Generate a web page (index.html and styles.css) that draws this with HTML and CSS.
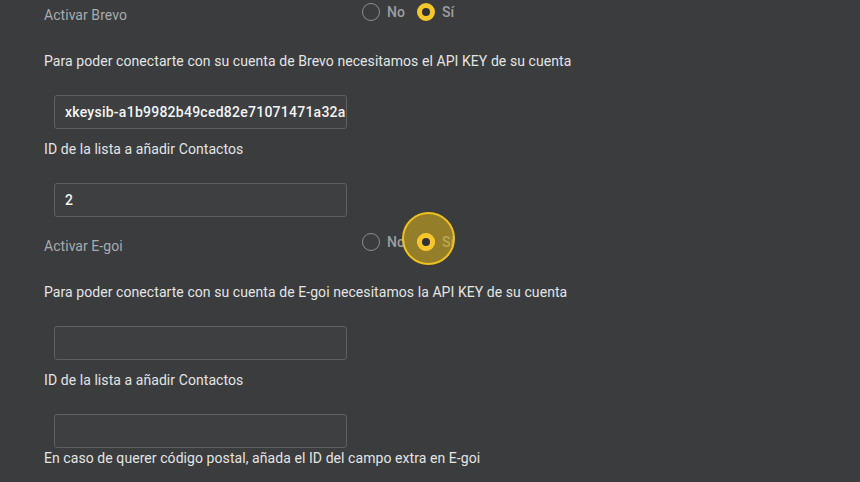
FILE: index.html
```html
<!DOCTYPE html>
<html lang="es">
<head>
<meta charset="utf-8">
<title>Integraciones</title>
<link rel="stylesheet" href="styles.css">
</head>
<body>
<main class="form">
  <div class="toggle">
    <span class="toggle-label">Activar Brevo</span>
    <div class="options">
      <label class="opt"><span class="radio"></span><span class="opt-text">No</span></label>
      <label class="opt"><span class="radio checked"></span><span class="opt-text">Sí</span></label>
    </div>
  </div>
  <p class="field-label">Para poder conectarte con su cuenta de Brevo necesitamos el API KEY de su cuenta</p>
  <div class="input">xkeysib-a1b9982b49ced82e71071471a32a</div>
  <p class="field-label">ID de la lista a añadir Contactos</p>
  <div class="input last">2</div>

  <div class="toggle">
    <span class="toggle-label">Activar E-goi</span>
    <div class="options">
      <label class="opt"><span class="radio"></span><span class="opt-text">No</span></label>
      <label class="opt"><span class="radio checked"><span class="ripple"></span></span><span class="opt-text">Sí</span></label>
    </div>
  </div>
  <p class="field-label">Para poder conectarte con su cuenta de E-goi necesitamos la API KEY de su cuenta</p>
  <div class="input"></div>
  <p class="field-label">ID de la lista a añadir Contactos</p>
  <div class="input last"></div>
  <p class="field-label">En caso de querer código postal, añada el ID del campo extra en E-goi</p>
</main>
</body>
</html>
```
FILE: styles.css
```css
html, body {
  margin: 0;
  padding: 0;
  background: #3a3c3e;
  height: 100%;
  overflow: hidden;
}
body {
  font-family: Roboto, "Liberation Sans", sans-serif;
  font-size: 14px;
  line-height: 20px;
  color: #e6e6e6;
}
.form {
  padding: 0 0 0 44px;
}
.toggle {
  display: flex;
  align-items: flex-start;
  height: 24px;
  margin-bottom: 27px;
}
.form .last + .toggle { margin-top: 13px; margin-bottom: 28px; }
.form .last + .toggle .toggle-label { padding-top: 6px; }
.toggle-label {
  width: 318px;
  padding-top: 5px;
  color: #a9abad;
  letter-spacing: 0.05px;
}
.options {
  display: flex;
  gap: 6px;
  padding-top: 3px;
}
.opt {
  display: flex;
  align-items: center;
  gap: 7px;
  height: 18px;
}
.opt-text {
  color: #9c9ea0;
  font-weight: 500;
  width: 24px;
}
.radio {
  position: relative;
  box-sizing: border-box;
  width: 18px;
  height: 18px;
  border-radius: 50%;
  border: 1.5px solid #8b8d8f;
}
.radio.checked {
  border: 5px solid #f5c72b;
  background: #2f3133;
}
.ripple {
  position: absolute;
  left: 50%;
  top: 50%;
  width: 53px;
  height: 53px;
  margin: -30px 0 0 -24px;
  box-sizing: border-box;
  border-radius: 50%;
  border: 2px solid #eec11f;
  background: rgba(210, 170, 28, 0.6);
  z-index: 2;
}
.ripple::after {
  content: "";
  position: absolute;
  left: 50%;
  top: 50%;
  width: 18px;
  height: 18px;
  margin: -6px 0 0 -12px;
  border-radius: 50%;
  box-sizing: border-box;
  border: 5px solid #f5c72b;
  background: #2f3133;
}
.field-label {
  margin: 0 0 24px;
  color: #e4e4e4;
  letter-spacing: 0.07px;
}
.input {
  box-sizing: border-box;
  width: 293px;
  height: 34px;
  margin: 0 0 10px 10px;
  padding: 0 10px;
  border: 1px solid #5d5f61;
  border-radius: 3px;
  background: #3d3f41;
  color: #f4f4f4;
  font-size: 14px;
  font-weight: 500;
  letter-spacing: 0.25px;
  line-height: 32px;
  white-space: nowrap;
  overflow: hidden;
}
.input.last { margin-bottom: 0; }
```
